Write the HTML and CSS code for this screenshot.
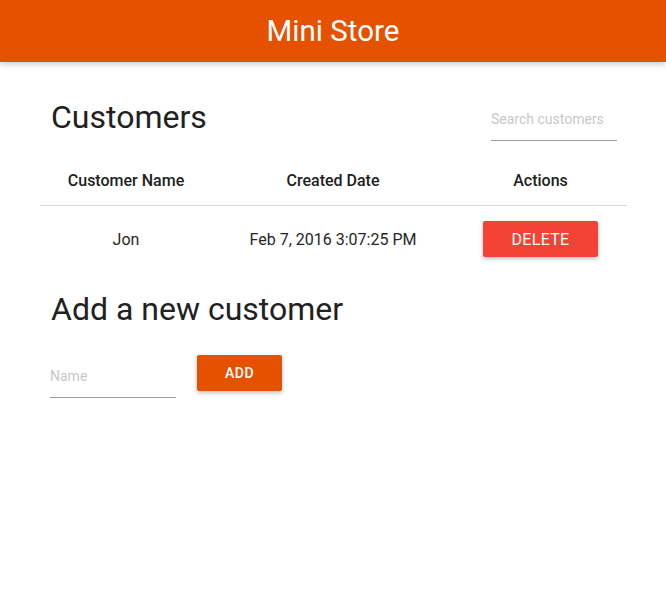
FILE: index.html
```html
<!DOCTYPE html>
<html>
<head>
<meta charset="utf-8">
<link rel="stylesheet" href="styles.css">
</head>
<body>
<header class="app-bar"><h1 class="app-title">Mini Store</h1></header>
<main class="content">
  <div class="list-head">
    <h2 class="heading">Customers</h2>
    <div class="field search"><span class="placeholder">Search customers</span></div>
  </div>
  <table class="table">
    <thead>
      <tr><th class="c1">Customer Name</th><th class="c2">Created Date</th><th class="c3">Actions</th></tr>
    </thead>
    <tbody>
      <tr><td>Jon</td><td>Feb 7, 2016 3:07:25 PM</td><td><button class="btn btn-delete">DELETE</button></td></tr>
    </tbody>
  </table>
  <h2 class="heading add-heading">Add a new customer</h2>
  <div class="add-row">
    <div class="field name"><span class="placeholder">Name</span></div>
    <button class="btn btn-add">ADD</button>
  </div>
</main>
</body>
</html>
```
FILE: styles.css
```css
* { box-sizing: border-box; }
html, body { margin: 0; padding: 0; background: #fff; }
body { font-family: Roboto, "Noto Sans", sans-serif; color: #212121; }
.app-bar {
  height: 62px;
  background: #e65100;
  display: flex;
  align-items: center;
  justify-content: center;
  box-shadow: 0 2px 6px rgba(0,0,0,0.22);
  position: relative;
}
.app-title { margin: 0; color: #fff; font-weight: 400; font-size: 29.5px; }
.content { padding: 0 39px 0 40px; }
.list-head {
  display: flex;
  justify-content: space-between;
  align-items: flex-start;
  padding: 0 10px 0 11px;
  margin-top: 35px;
}
.heading { margin: 0; font-weight: 400; font-size: 32px; line-height: 40px; color: #212121; }
.field {
  border-bottom: 1px solid #9e9e9e;
  height: 44px;
  padding-top: 12px;
}
.placeholder { font-size: 14px; color: #c8c8c8; }
.search { width: 126px; }
.table { width: 100%; border-collapse: collapse; margin-top: 14px; }
.table th {
  height: 50px;
  font-size: 16px;
  font-weight: 500;
  color: #212121;
  border-bottom: 1px solid #d8d8d8;
  text-align: center;
  padding: 2px 0 0;
}
.c1 { width: 172px; }
.c2 { width: 242px; }
.table td {
  height: 66px;
  text-align: center;
  font-size: 16px;
  color: #262626;
  padding: 2px 0 0;
}
.btn {
  border: 0;
  border-radius: 2px;
  color: #fff;
  font-family: Roboto, "Noto Sans", sans-serif;
  font-weight: 500;
  height: 36px;
  box-shadow: 0 2px 4px rgba(0,0,0,0.25);
  cursor: pointer;
}
.btn-delete { background: #f44336; width: 115px; font-size: 16px; font-weight: 400; letter-spacing: 0.3px; }
.add-heading { margin: 18px 0 0 11px; }
.add-row { display: flex; align-items: flex-start; gap: 21px; margin-top: 26px; padding-left: 10px; }
.name { width: 126px; margin-top: -3px; height: 46px; padding-top: 14px; }
.btn-add { background: #e65100; width: 85px; font-size: 14px; letter-spacing: 0.5px; }
```
